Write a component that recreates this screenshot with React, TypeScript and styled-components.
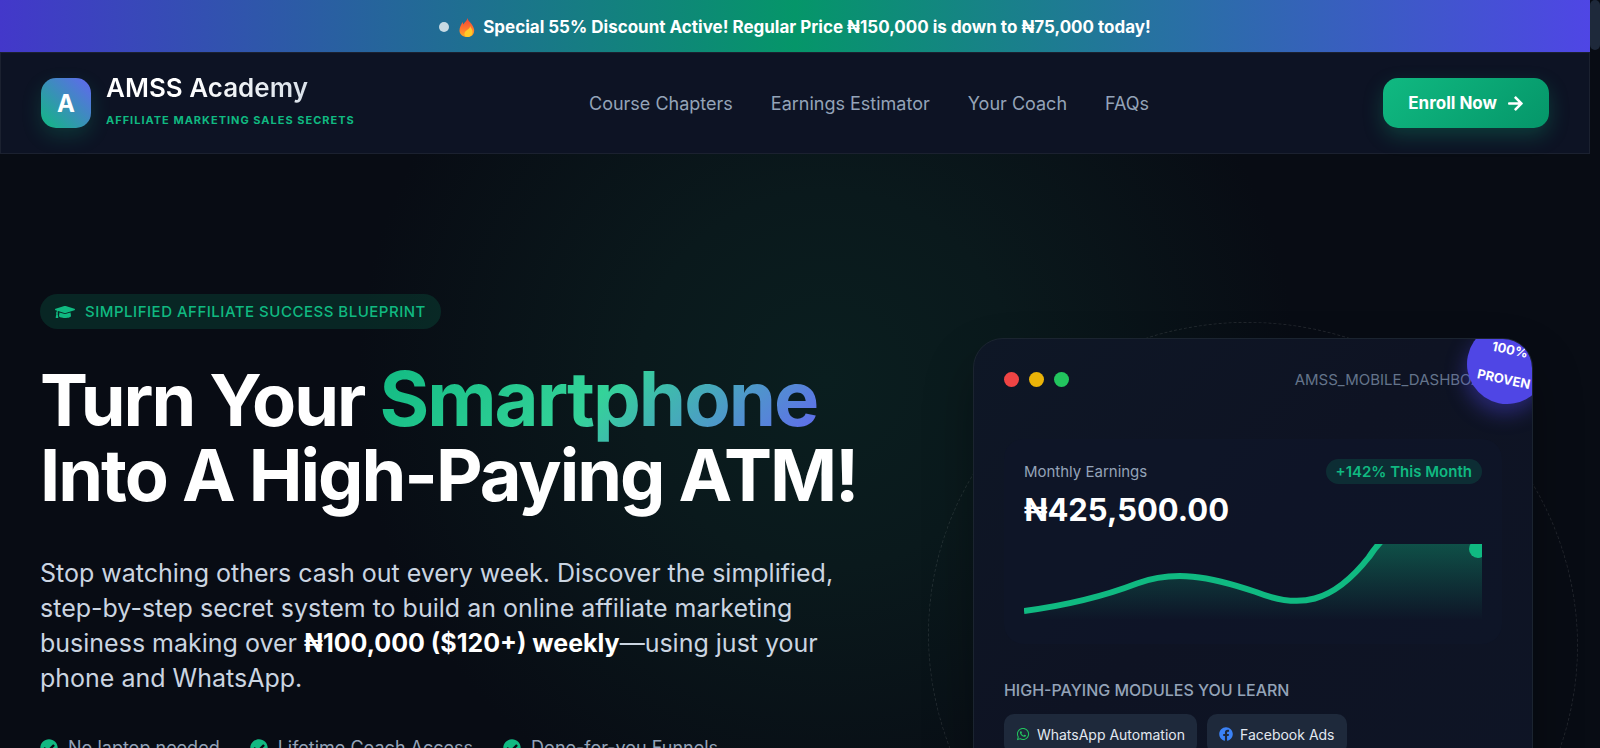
import React from "react";
import styled, { createGlobalStyle } from "styled-components";
import {
  FaArrowRight,
  FaCheckCircle,
  FaFacebook,
  FaGraduationCap,
  FaWhatsapp,
} from "react-icons/fa";

const sans = `Inter, "Noto Sans", "Liberation Sans", sans-serif`;

const GlobalStyle = createGlobalStyle`
  *, *::before, *::after { box-sizing: border-box; }
  body {
    margin: 0;
    background: #080c14;
    color: #fff;
    font-family: ${sans};
    font-size: 18px;
    overflow: hidden;
  }
  h1, h2, p, ul { margin: 0; padding: 0; }
  ul { list-style: none; }
`;

const Viewport = styled.div`
  display: flex;
  height: 100vh;
  overflow: hidden;
`;

const Page = styled.div`
  flex: 1;
  min-width: 0;
  background: radial-gradient(circle 470px at 52% 380px, #0a1e1f 0%, #0a191c 40%, #080c14 100%);
`;

const ScrollTrack = styled.div`
  width: 10px;
  background: #080c14;
`;

const ScrollThumb = styled.div`
  height: 50px;
  border-radius: 5px;
  background: #1e293b;
`;

const Banner = styled.div`
  display: flex;
  align-items: center;
  justify-content: center;
  gap: 10px;
  height: 52px;
  padding: 2px 20px 0;
  background: linear-gradient(90deg, #4338ca, #059669, #4f46e5);
  font-size: 17px;
  font-weight: 700;
`;

const PulseDot = styled.span`
  width: 10px;
  height: 10px;
  border-radius: 50%;
  background: rgba(255, 255, 255, 0.75);
`;

const BannerText = styled.span`
  display: flex;
  align-items: center;
  gap: 8px;
`;

const Header = styled.header`
  display: flex;
  align-items: center;
  justify-content: space-between;
  padding: 25px 40px;
  height: 102px;
  border: 1px solid #1b2130;
  background: #0d1324;
`;

const Brand = styled.a`
  display: flex;
  align-items: center;
  gap: 15px;
  color: inherit;
  text-decoration: none;
`;

const BrandMark = styled.span`
  display: grid;
  place-items: center;
  width: 50px;
  height: 50px;
  border-radius: 15px;
  background: linear-gradient(45deg, #10b981, #6366f1);
  box-shadow: 0 8px 20px rgba(16, 185, 129, 0.2);
  font-size: 24px;
  font-weight: 700;
`;

const BrandText = styled.span`
  display: flex;
  flex-direction: column;
`;

const BrandName = styled.span`
  font-size: 26px;
  line-height: 34px;
  font-weight: 600;
  background: linear-gradient(90deg, #fff 30%, #cbd5e1);
  background-clip: text;
  -webkit-background-clip: text;
  color: transparent;
`;

const BrandTag = styled.span`
  color: #10b981;
  font-size: 11px;
  line-height: 30px;
  font-weight: 700;
  letter-spacing: 1px;
`;

const Nav = styled.nav`
  display: flex;
  gap: 38px;
`;

const NavLink = styled.a`
  color: #94a3b8;
  font-size: 18px;
  text-decoration: none;
`;

const EnrollButton = styled.button`
  display: flex;
  align-items: center;
  gap: 10px;
  height: 50px;
  padding: 0 25px;
  border: 0;
  border-radius: 15px;
  background: linear-gradient(135deg, #10b981, #059669);
  box-shadow: 0 8px 20px rgba(16, 185, 129, 0.25);
  color: #fff;
  font-family: inherit;
  font-size: 17px;
  font-weight: 700;
`;

const Hero = styled.main`
  display: grid;
  grid-template-columns: minmax(0, 7fr) minmax(0, 5fr);
  gap: 84px;
  align-items: start;
  padding: 140px 40px 0;
`;

const Pitch = styled.section`
  display: flex;
  flex-direction: column;
  align-items: flex-start;
`;

const Eyebrow = styled.p`
  display: flex;
  align-items: center;
  gap: 10px;
  height: 35px;
  padding: 0 15px;
  border-radius: 18px;
  background: rgba(16, 185, 129, 0.15);
  color: #10b981;
  font-size: 15px;
  font-weight: 500;
  letter-spacing: 0.5px;
`;

const Title = styled.h1`
  margin-top: 32px;
  font-size: 72px;
  line-height: 75px;
  font-weight: 700;
  letter-spacing: -2px;
`;

const Highlight = styled.span`
  font-size: 76px;
  background: linear-gradient(135deg, #10b981, #34d399 50%, #6366f1);
  background-clip: text;
  -webkit-background-clip: text;
  color: transparent;
`;

const Lead = styled.p`
  max-width: 800px;
  margin-top: 44px;
  color: #cbd5e1;
  font-size: 25px;
  line-height: 35px;

  strong {
    color: #fff;
    font-weight: 700;
  }
`;

const Perks = styled.ul`
  display: flex;
  gap: 30px;
  margin-top: 40px;
`;

const Perk = styled.li`
  display: flex;
  align-items: center;
  gap: 10px;
  color: #94a3b8;
  font-size: 18px;
  line-height: 24px;

  svg { color: #10b981; }
`;

const Showcase = styled.section`
  position: relative;
  margin-top: 44px;
`;

const Orbit = styled.div`
  position: absolute;
  top: 302px;
  left: 50%;
  width: 652px;
  height: 634px;
  transform: translate(-50%, -50%) rotate(20deg);
  border: 1px dashed rgba(255, 255, 255, 0.1);
  border-radius: 50%;
`;

const Card = styled.div`
  position: relative;
  max-width: 560px;
  min-height: 622px;
  margin: 0 auto;
  padding: 30px;
  overflow: hidden;
  border: 1px solid #1b2430;
  border-radius: 30px;
  background: linear-gradient(135deg, #0e1726, #0e1323 40%, #0e1526);
  box-shadow: 0 25px 50px rgba(0, 0, 0, 0.3);
`;

const CardBar = styled.div`
  display: flex;
  align-items: center;
  justify-content: space-between;
  height: 20px;
  color: #64748b;
  font-size: 15px;
`;

const Lights = styled.div`
  display: flex;
  gap: 10px;
`;

const Light = styled.span<{ $color: string }>`
  width: 15px;
  height: 15px;
  border-radius: 50%;
  background: ${(p) => p.$color};
`;

const ProvenSeal = styled.div`
  position: absolute;
  top: -15px;
  right: -15px;
  display: grid;
  place-items: center;
  align-content: center;
  width: 80px;
  height: 80px;
  border-radius: 50%;
  transform: rotate(12deg);
  background: #4f46e5;
  box-shadow: 0 10px 20px rgba(79, 70, 229, 0.4);
  font-size: 13px;
  line-height: 30px;
  font-weight: 700;
`;

const Earnings = styled.div`
  margin-top: 50px;
  padding: 20px;
  border-radius: 20px;
  background: rgba(15, 21, 42, 0.6);
`;

const EarningsRow = styled.div`
  display: flex;
  align-items: center;
  justify-content: space-between;
  color: #94a3b8;
  font-size: 15px;
`;

const Growth = styled.span`
  padding: 0 10px;
  border-radius: 13px;
  background: rgba(16, 185, 129, 0.15);
  color: #10b981;
  font-size: 15px;
  line-height: 25px;
  font-weight: 600;
`;

const Amount = styled.p`
  margin-top: 5px;
  font-size: 31px;
  line-height: 42px;
  font-weight: 700;
`;

const Chart = styled.svg`
  display: block;
  width: 100%;
  height: 80px;
  margin-top: 13px;
`;

const ModulesTitle = styled.h2`
  margin-top: 36px;
  color: #94a3b8;
  font-size: 16px;
  line-height: 20px;
  font-weight: 500;
`;

const Chips = styled.ul`
  display: flex;
  gap: 10px;
  margin-top: 14px;
`;

const Chip = styled.li`
  display: flex;
  align-items: center;
  gap: 7px;
  height: 40px;
  padding: 0 12px;
  border-radius: 10px;
  background: #1e293b;
  color: #e2e8f0;
  font-size: 14px;
`;

function Flame() {
  return (
    <svg width="16" height="19" viewBox="0 0 32 38" aria-hidden="true">
      <defs>
        <linearGradient id="flame" x1="0" y1="0" x2="0" y2="1">
          <stop offset="0" stopColor="#f44336" />
          <stop offset="0.6" stopColor="#ff7a2f" />
          <stop offset="1" stopColor="#ffa726" />
        </linearGradient>
      </defs>
      <path
        d="M17 0c1 7 8 9 11 17 2 4 3 7 2 11-1 6-6 10-14 10S1 33 1 25c0-6 3-11 6-17l2 5C11 8 16 6 17 0z"
        fill="url(#flame)"
      />
      <path
        d="M22 16c1 6-9 8-11 14-1 4 1 7 5 8 6 0 11-4 11-10 0-5-3-8-5-12z"
        fill="#ffca28"
      />
    </svg>
  );
}

const links = ["Course Chapters", "Earnings Estimator", "Your Coach", "FAQs"];
const perks = ["No laptop needed", "Lifetime Coach Access", "Done-for-you Funnels"];
const line =
  "M0 67C45 61 78 53 113 39.5C150 26 185 32 232 48C275 65 308 60 345 13C360 -10 385 -30 410 -30";

export default function App() {
  return (
    <Viewport>
      <GlobalStyle />
      <Page>
        <Banner>
          <PulseDot />
          <BannerText>
            <Flame />
            Special 55% Discount Active! Regular Price ₦150,000 is down to ₦75,000 today!
          </BannerText>
        </Banner>
        <Header>
          <Brand href="#">
            <BrandMark>A</BrandMark>
            <BrandText>
              <BrandName>AMSS Academy</BrandName>
              <BrandTag>AFFILIATE MARKETING SALES SECRETS</BrandTag>
            </BrandText>
          </Brand>
          <Nav>
            {links.map((label) => (
              <NavLink href="#" key={label}>{label}</NavLink>
            ))}
          </Nav>
          <EnrollButton>
            Enroll Now
            <FaArrowRight size={17} />
          </EnrollButton>
        </Header>
        <Hero>
          <Pitch>
            <Eyebrow>
              <FaGraduationCap size={20} />
              SIMPLIFIED AFFILIATE SUCCESS BLUEPRINT
            </Eyebrow>
            <Title>
              Turn Your <Highlight>Smartphone</Highlight>
              <br />
              Into A High-Paying ATM!
            </Title>
            <Lead>
              Stop watching others cash out every week. Discover the simplified,
              step-by-step secret system to build an online affiliate marketing
              business making over <strong>₦100,000 ($120+) weekly</strong>—using
              just your phone and WhatsApp.
            </Lead>
            <Perks>
              {perks.map((perk) => (
                <Perk key={perk}>
                  <FaCheckCircle size={18} />
                  {perk}
                </Perk>
              ))}
            </Perks>
          </Pitch>
          <Showcase>
            <Orbit />
            <Card>
              <CardBar>
                <Lights>
                  <Light $color="#ef4444" />
                  <Light $color="#eab308" />
                  <Light $color="#22c55e" />
                </Lights>
                AMSS_MOBILE_DASHBOARD
              </CardBar>
              <Earnings>
                <EarningsRow>
                  Monthly Earnings
                  <Growth>+142% This Month</Growth>
                </EarningsRow>
                <Amount>₦425,500.00</Amount>
                <Chart viewBox="0 0 458 80" preserveAspectRatio="none" aria-hidden="true">
                  <defs>
                    <linearGradient id="area" x1="0" y1="0" x2="0" y2="76" gradientUnits="userSpaceOnUse">
                      <stop offset="0" stopColor="#10b981" stopOpacity="0.36" />
                      <stop offset="1" stopColor="#10b981" stopOpacity="0" />
                    </linearGradient>
                  </defs>
                  <path d={`${line}H458V80H0Z`} fill="url(#area)" />
                  <path d={line} fill="none" stroke="#10b981" strokeWidth="6" />
                  <circle cx="454" cy="5" r="9" fill="#10b981" />
                </Chart>
              </Earnings>
              <ModulesTitle>HIGH-PAYING MODULES YOU LEARN</ModulesTitle>
              <Chips>
                <Chip>
                  <FaWhatsapp size={14} color="#22c55e" />
                  WhatsApp Automation
                </Chip>
                <Chip>
                  <FaFacebook size={14} color="#3b82f6" />
                  Facebook Ads
                </Chip>
              </Chips>
              <ProvenSeal>
                <span>100%</span>
                <span>PROVEN</span>
              </ProvenSeal>
            </Card>
          </Showcase>
        </Hero>
      </Page>
      <ScrollTrack>
        <ScrollThumb />
      </ScrollTrack>
    </Viewport>
  );
}
